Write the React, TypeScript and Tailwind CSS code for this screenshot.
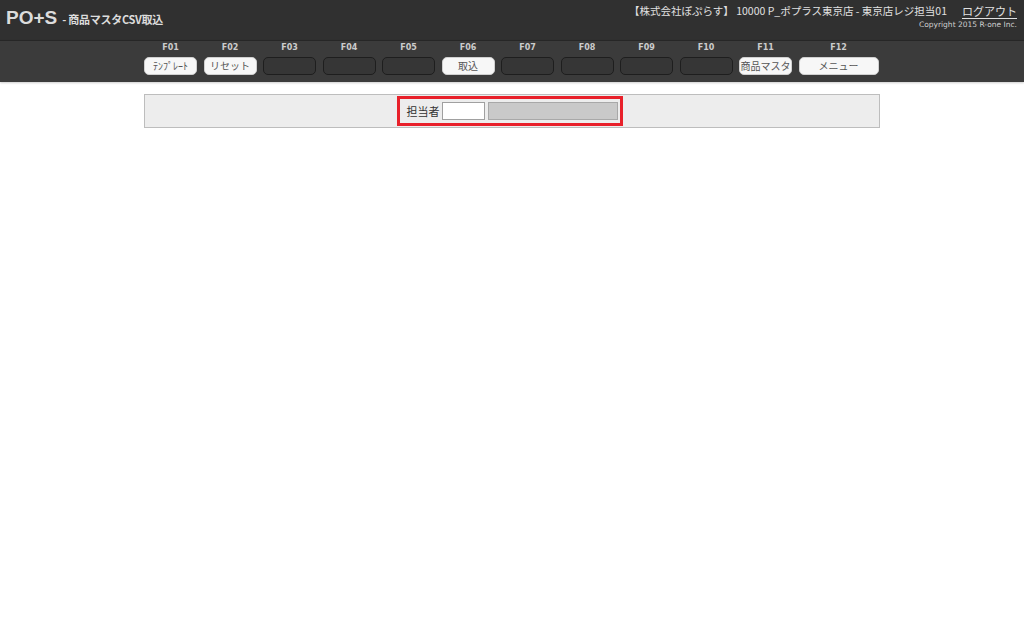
const jp = { fontFamily: '"Noto Sans CJK JP", "DejaVu Sans", sans-serif' };

const keys: { key: string; label: string; wide?: boolean }[] = [
  { key: "F01", label: "ﾃﾝﾌﾟﾚｰﾄ" },
  { key: "F02", label: "リセット" },
  { key: "F03", label: "" },
  { key: "F04", label: "" },
  { key: "F05", label: "" },
  { key: "F06", label: "取込" },
  { key: "F07", label: "" },
  { key: "F08", label: "" },
  { key: "F09", label: "" },
  { key: "F10", label: "" },
  { key: "F11", label: "商品マスタ" },
  { key: "F12", label: "メニュー", wide: true },
];

export default function App() {
  return (
    <div className="min-h-screen bg-white" style={jp}>
      {/* header */}
      <div className="h-[40px] bg-[#303030] flex justify-between items-start pl-[6px] pr-[7px]">
        <div className="flex items-baseline pt-[7px] text-[#dcdcdc] font-bold">
          <span className="text-[19px] leading-[22px]" style={{ fontFamily: '"Liberation Sans", Arial, sans-serif' }}>
            PO+S
          </span>
          <span className="text-[11px] ml-[5px] tracking-tight">- 商品マスタCSV取込</span>
        </div>
        <div className="flex flex-col items-end pt-[4px] text-[#e0e0e0]">
          <div className="flex items-center text-[10.5px] leading-[14px]">
            <span>【株式会社ぽぷらす】 10000 P_ポプラス東京店 - 東京店レジ担当01</span>
            <a className="ml-[15px] underline underline-offset-2 text-[11px]">ログアウト</a>
          </div>
          <div className="text-[7.5px] leading-[10px] mt-[2px] text-[#cfcfcf]" style={{ fontFamily: '"DejaVu Sans", sans-serif' }}>
            Copyright 2015 R-one Inc.
          </div>
        </div>
      </div>

      {/* function key bar */}
      <div className="h-[42px] bg-[#3b3b3b] border-t border-[#262626] shadow-[0_1px_2px_rgba(0,0,0,0.2)]">
        <div className="w-[736px] mx-auto flex gap-[6.5px] pt-[1px]">
          {keys.map((k) => (
            <div key={k.key} className={`flex flex-col items-center ${k.wide ? "w-[80px]" : "w-[53px]"}`}>
              <div className="text-[8px] leading-[12px] font-bold text-[#cccccc]" style={{ fontFamily: '"DejaVu Sans", sans-serif' }}>
                {k.key}
              </div>
              {k.label ? (
                <div className="mt-[3px] w-full h-[18px] rounded-[5px] bg-[#f7f7f7] border border-[#d0d0d0] flex items-center justify-center text-[10px] text-[#555] leading-none whitespace-nowrap">
                  {k.label}
                </div>
              ) : (
                <div className="mt-[3px] w-full h-[18px] rounded-[5px] bg-[#363636] border border-[#1e1e1e]" />
              )}
            </div>
          ))}
        </div>
      </div>

      {/* content */}
      <div className="w-[736px] mx-auto mt-[12px] bg-[#ededed] border border-[#bdbdbd] p-px pr-[6px] flex justify-center">
        <div className="border-[3px] border-[#e8202a] flex items-center pl-[7px] pr-[2px] py-[3px]">
          <span className="text-[11px] text-[#333] mr-[2px]">担当者</span>
          <div className="w-[43px] h-[18px] bg-white border border-[#a0a0a0]" />
          <div className="w-[130px] h-[18px] ml-[3px] bg-[#c9c9c9] border border-[#a8a8a8]" />
        </div>
      </div>
    </div>
  );
}
